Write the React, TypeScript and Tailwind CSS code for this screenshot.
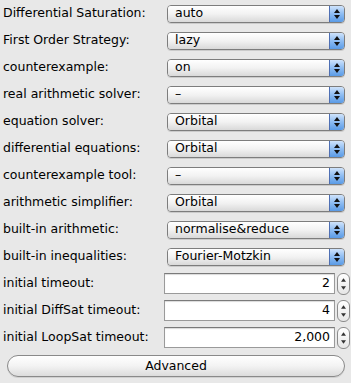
import type { ReactNode } from 'react'

const font = { fontFamily: '"DejaVu Sans", "Lucida Grande", sans-serif' }

const selects: [string, string][] = [
  ['Differential Saturation:', 'auto'],
  ['First Order Strategy:', 'lazy'],
  ['counterexample:', 'on'],
  ['real arithmetic solver:', '–'],
  ['equation solver:', 'Orbital'],
  ['differential equations:', 'Orbital'],
  ['counterexample tool:', '–'],
  ['arithmetic simplifier:', 'Orbital'],
  ['built-in arithmetic:', 'normalise&reduce'],
  ['built-in inequalities:', 'Fourier-Motzkin'],
]

const numbers: [string, string][] = [
  ['initial timeout:', '2'],
  ['initial DiffSat timeout:', '4'],
  ['initial LoopSat timeout:', '2,000'],
]

function Row({ label, children }: { label: string; children: ReactNode }) {
  return (
    <div className="flex h-[27px] items-center">
      <div className="w-[164px] shrink-0 pl-[3px] text-[12.5px] text-black whitespace-nowrap">{label}</div>
      {children}
    </div>
  )
}

function PopUp({ value }: { value: string }) {
  return (
    <div className="ml-[3px] flex h-[18px] w-[178px] overflow-hidden rounded-[4px] border border-[#7d7d7d] shadow-[0_1px_0_rgba(0,0,0,0.12)]">
      <div className="flex flex-1 items-center bg-gradient-to-b from-white via-[#f2f2f2] to-[#d9d9d9] pl-[7px] text-[12.5px] leading-none text-black">{value}</div>
      <div className="flex w-[15px] flex-col items-center justify-center gap-[2px] border-l border-[#4e6fb3] bg-gradient-to-b from-[#cfe3fb] via-[#8dbcf2] to-[#5a9be6]">
        <svg width="6" height="4" viewBox="0 0 6 4"><path d="M3 0 L6 4 L0 4 Z" fill="#111" /></svg>
        <svg width="6" height="4" viewBox="0 0 6 4"><path d="M0 0 L6 0 L3 4 Z" fill="#111" /></svg>
      </div>
    </div>
  )
}

function Stepper({ value }: { value: string }) {
  return (
    <div className="flex items-center">
      <div className="flex h-[21px] w-[171px] items-center justify-end border border-[#9a9a9a] border-t-[#7a7a7a] bg-white pr-[4px] text-[12.5px] text-black shadow-[inset_0_1px_1px_rgba(0,0,0,0.15)]">{value}</div>
      <div className="ml-[2px] flex h-[22px] w-[13px] flex-col items-center justify-center gap-[4px] rounded-[6px] border border-[#8c8c8c] bg-gradient-to-b from-white to-[#e6e6e6]">
        <svg width="5" height="4" viewBox="0 0 6 4"><path d="M3 0 L6 4 L0 4 Z" fill="#333" /></svg>
        <svg width="5" height="4" viewBox="0 0 6 4"><path d="M0 0 L6 0 L3 4 Z" fill="#333" /></svg>
      </div>
    </div>
  )
}

export default function App() {
  return (
    <div className="h-[383px] w-[351px] bg-[#e8e8e8]" style={font}>
      {selects.map(([l, v]) => (
        <Row key={l} label={l}><PopUp value={v} /></Row>
      ))}
      {numbers.map(([l, v]) => (
        <Row key={l} label={l}><Stepper value={v} /></Row>
      ))}
      <div className="flex pl-[7px] pt-[4px]">
        <button className="flex h-[22px] w-[338px] items-center justify-center rounded-full border border-[#8a8a8a] bg-gradient-to-b from-white via-[#f3f3f3] to-[#dcdcdc] text-[12.5px] text-black shadow-[0_1px_0_rgba(0,0,0,0.1)]">Advanced</button>
      </div>
    </div>
  )
}
